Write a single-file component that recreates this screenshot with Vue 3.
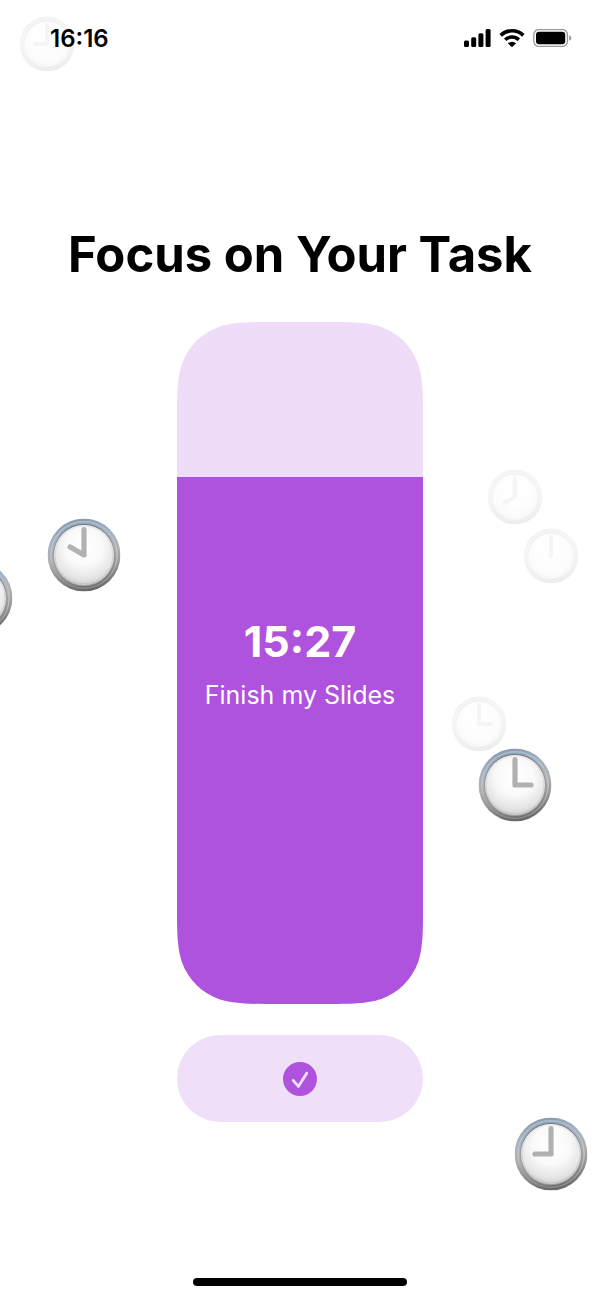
<template>
  <div class="screen">
    <div class="clocks" aria-hidden="true">
      <svg
        v-for="(clock, i) in clocks"
        :key="i"
        class="clock"
        :class="{ faded: clock.faded }"
        :style="{ left: clock.x + '%', top: clock.y + '%' }"
        viewBox="0 0 73 73"
      >
        <circle cx="36.5" cy="36.5" r="36.4" fill="url(#rim)" />
        <circle cx="36.5" cy="36.5" r="33.2" fill="none" stroke="url(#bevel)" stroke-width="1.4" />
        <circle cx="36.5" cy="36.5" r="31" fill="url(#edge)" />
        <circle cx="36.5" cy="36.5" r="30" fill="url(#face)" />
        <circle cx="36.5" cy="36.5" r="28.9" fill="none" stroke="url(#gloss)" stroke-width=".8" />
        <path :d="handPath(clock.hour)" fill="none" stroke="#b0b1b3" stroke-width="5.2" stroke-linecap="round" stroke-linejoin="round" />
      </svg>
    </div>

    <header class="status">
      <time class="status-time">16:16</time>
      <div class="status-icons">
        <svg width="27" height="18" viewBox="0 0 27 18">
          <rect x="0" y="11.5" width="5" height="6.5" rx="1.5" />
          <rect x="7.2" y="8.3" width="5" height="9.7" rx="1.5" />
          <rect x="14.4" y="4.3" width="5" height="13.7" rx="1.5" />
          <rect x="21.6" y="0" width="5" height="18" rx="1.5" />
        </svg>
        <svg width="26" height="18" viewBox="0 0 26 18">
          <path d="M1.7 6.4a16.2 16.2 0 0 1 22.6 0M6.2 10.8a9.8 9.8 0 0 1 13.6 0" fill="none" stroke="#000" stroke-width="3.6" />
          <path d="M8.9 14.3a6 6 0 0 1 8.2 0L13 18.2z" />
        </svg>
        <svg width="39" height="18" viewBox="0 0 39 18">
          <rect x=".8" y=".6" width="33.6" height="16.8" rx="5" fill="none" stroke="#999" stroke-width="1.3" />
          <rect x="3" y="2.8" width="29.2" height="12.4" rx="3" />
          <path d="M36.2 6.2c1.5.5 2.2 1.6 2.2 2.8s-.7 2.3-2.2 2.8z" fill="#999" />
        </svg>
      </div>
    </header>

    <main class="content">
      <h1 class="title">Focus on Your Task</h1>

      <section class="timer">
        <div class="timer-fill" :style="{ height: progress + '%' }"></div>
        <div class="timer-text">
          <div class="timer-value">15:27</div>
          <div class="timer-task">Finish my Slides</div>
        </div>
      </section>

      <button class="done" type="button" aria-label="Done">
        <svg width="34" height="34" viewBox="0 0 34 34">
          <circle cx="17" cy="17" r="17" fill="#af52de" />
          <path d="M10.2 18.4l5.2 6L23.7 11.2" fill="none" stroke="#f0dff9" stroke-width="2.8" stroke-linecap="round" stroke-linejoin="round" />
        </svg>
      </button>
    </main>

    <div class="home-bar"></div>

    <svg class="defs" width="0" height="0">
      <defs>
        <clipPath id="timer-shape" clipPathUnits="objectBoundingBox">
          <path :d="timerShape" :transform="`scale(${1 / shapeW} ${1 / shapeH})`" />
        </clipPath>
        <linearGradient id="rim" x1=".4" y1="0" x2=".6" y2="1">
          <stop offset="0" stop-color="#8c9bac" />
          <stop offset=".25" stop-color="#a4b3c4" />
          <stop offset=".5" stop-color="#b2aeab" />
          <stop offset=".75" stop-color="#8d8e90" />
          <stop offset="1" stop-color="#646464" />
        </linearGradient>
        <linearGradient id="bevel" x1="0" y1="0" x2="0" y2="1">
          <stop offset="0" stop-color="#a9bdd3" />
          <stop offset=".5" stop-color="#c3c5c7" />
          <stop offset="1" stop-color="#85878a" />
        </linearGradient>
        <linearGradient id="edge" x1="0" y1="0" x2="0" y2="1">
          <stop offset="0" stop-color="#71787f" />
          <stop offset=".4" stop-color="#94989b" />
          <stop offset="1" stop-color="#a1a4a7" />
        </linearGradient>
        <radialGradient id="face" cx=".5" cy=".36" r=".68">
          <stop offset="0" stop-color="#fff" />
          <stop offset=".45" stop-color="#fafafa" />
          <stop offset=".8" stop-color="#e4e4e4" />
          <stop offset="1" stop-color="#c6c7c8" />
        </radialGradient>
        <linearGradient id="gloss" x1="0" y1="0" x2="0" y2="1">
          <stop offset="0" stop-color="#e0e3e6" />
          <stop offset="1" stop-color="#bcbec0" />
        </linearGradient>
      </defs>
    </svg>
  </div>
</template>

<script setup>
import { ref } from 'vue'

const progress = ref(77.3)

// centres, in percent of the screen
const clocks = [
  { x: 7.9, y: 3.4, hour: 9, faded: true },
  { x: 85.9, y: 38.25, hour: 8, faded: true },
  { x: 91.8, y: 42.8, hour: 12, faded: true },
  { x: 79.8, y: 55.75, hour: 3, faded: true },
  { x: 13.95, y: 42.75, hour: 10 },
  { x: -4, y: 46, hour: 9 },
  { x: 85.9, y: 60.45, hour: 3 },
  { x: 91.9, y: 88.8, hour: 9 }
]

function handPath(hour) {
  const angle = (hour * Math.PI) / 6
  const x = 36.5 + Math.sin(angle) * 16
  const y = 36.5 - Math.cos(angle) * 16
  return `M36.5 11V36.5L${x.toFixed(2)} ${y.toFixed(2)}`
}

// rounded rectangle with continuous corners
const shapeW = 246
const shapeH = 682
const timerShape = continuousRect(shapeW, shapeH, 66)

function continuousRect(w, h, r) {
  const a = 1.5287 * r
  const b = 1.0885 * r
  const c = 0.8684 * r
  const d = 0.6315 * r
  const e = 0.3728 * r
  const f = 0.1691 * r
  const g = 0.0749 * r
  return [
    `M${a} 0H${w - a}`,
    `C${w - b} 0 ${w - c} 0 ${w - d} ${g}`,
    `C${w - e} ${f} ${w - f} ${e} ${w - g} ${d}`,
    `C${w} ${c} ${w} ${b} ${w} ${a}`,
    `V${h - a}`,
    `C${w} ${h - b} ${w} ${h - c} ${w - g} ${h - d}`,
    `C${w - f} ${h - e} ${w - e} ${h - f} ${w - d} ${h - g}`,
    `C${w - c} ${h} ${w - b} ${h} ${w - a} ${h}`,
    `H${a}`,
    `C${b} ${h} ${c} ${h} ${d} ${h - g}`,
    `C${e} ${h - f} ${f} ${h - e} ${g} ${h - d}`,
    `C0 ${h - c} 0 ${h - b} 0 ${h - a}`,
    `V${a}`,
    `C0 ${b} 0 ${c} ${g} ${d}`,
    `C${f} ${e} ${e} ${f} ${d} ${g}`,
    `C${c} 0 ${b} 0 ${a} 0Z`
  ].join('')
}
</script>

<style>
body {
  margin: 0;
  background: #fff;
}
</style>

<style scoped>
.screen {
  position: relative;
  display: flex;
  flex-direction: column;
  min-height: 100vh;
  box-sizing: border-box;
  overflow: hidden;
  color: #000;
  font-family: Inter, 'Liberation Sans', sans-serif;
}
.clocks {
  position: absolute;
  inset: 0;
}
.clock {
  position: absolute;
  width: 73px;
  height: 73px;
  transform: translate(-50%, -50%);
}
.clock.faded {
  width: 55px;
  height: 55px;
  opacity: 0.12;
}
.status {
  position: relative;
  display: flex;
  align-items: flex-start;
  justify-content: space-between;
  padding: 24px 28px 0 50px;
}
.status-time {
  font-size: 24px;
  line-height: 30px;
  font-weight: 600;
}
.status-icons {
  display: flex;
  align-items: center;
  gap: 8px;
  padding-top: 5px;
}
.content {
  position: relative;
  display: flex;
  flex: 1;
  flex-direction: column;
  align-items: center;
  padding-top: 170px;
}
.title {
  margin: 0 0 36px;
  font-size: 49px;
  line-height: 62px;
  font-weight: 700;
  text-align: center;
}
.timer {
  position: relative;
  display: flex;
  align-items: center;
  justify-content: center;
  width: 41%;
  aspect-ratio: 246 / 682;
  background: #eedcf8;
  clip-path: url(#timer-shape);
}
.timer-fill {
  position: absolute;
  left: 0;
  right: 0;
  bottom: 0;
  background: #af52de;
}
.timer-text {
  position: relative;
  padding-top: 4px;
  color: #fff;
  text-align: center;
}
.timer-value {
  font-size: 43px;
  line-height: 60px;
  font-weight: 700;
}
.timer-task {
  font-size: 25px;
  line-height: 48px;
}
.done {
  display: flex;
  align-items: center;
  justify-content: center;
  width: 41%;
  margin-top: 31px;
  padding: 27px 0 26px;
  border: 0;
  border-radius: 44px;
  background: #f0dff9;
  cursor: pointer;
}
.home-bar {
  position: relative;
  align-self: center;
  width: 214px;
  height: 8px;
  margin-bottom: 13px;
  border-radius: 4px;
  background: #000;
}
.defs {
  position: absolute;
}
</style>
